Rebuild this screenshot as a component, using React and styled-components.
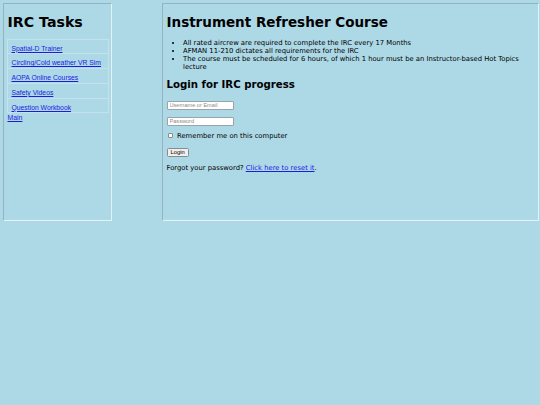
import React from 'react';
import styled, { createGlobalStyle } from 'styled-components';

const Global = createGlobalStyle`
  html, body {
    margin: 0;
    padding: 0;
    background: #add8e6;
    font-family: "DejaVu Sans", Verdana, sans-serif;
    color: #000;
  }
`;

const Styled = {
  Page: styled.div`
    display: flex;
    align-items: flex-start;
    padding: 3px;
    gap: 50px;
    width: 540px;
    height: 405px;
    box-sizing: border-box;
  `,
  Panel: styled.div`
    box-sizing: border-box;
    width: ${(p) => p.width}px;
    height: 218px;
    border: 1.5px solid #e4f2f7;
    border-top-color: #92b4c0;
    border-left-color: #92b4c0;
    padding: 0 3px;
    flex-shrink: 0;
  `,
  SideTitle: styled.h1`
    margin: 9.8px 0 8.5px 0.5px;
    font-size: 14.2px;
    line-height: 16.5px;
    font-weight: bold;
  `,
  TaskList: styled.ul`
    list-style: none;
    margin: 0;
    padding: 0;
    width: 100px;
    border: 1px solid #c4e2ed;
  `,
  TaskItem: styled.li`
    height: 13.7px;
    line-height: 12px;
    padding-left: 3.5px;
    border-top: 1px solid #c4e2ed;
    &:first-child {
      border-top: none;
    }
    a {
      font-family: "Liberation Sans", Arial, sans-serif;
      font-size: 6.8px;
      color: #1c1ce0;
    }
  `,
  MainLink: styled.a`
    display: block;
    margin: 1px 0 0 0.5px;
    font-family: "Liberation Sans", Arial, sans-serif;
    font-size: 6.9px;
    line-height: 8px;
    color: #1c1ce0;
  `,
  Title: styled.h1`
    margin: 9.8px 0 8.5px 0.5px;
    font-size: 13.5px;
    line-height: 16.3px;
    font-weight: bold;
  `,
  Bullets: styled.ul`
    margin: 0;
    padding-left: 17px;
    font-size: 6.8px;
    line-height: 8px;
    li {
      margin: 0;
    }
  `,
  SubTitle: styled.h2`
    margin: 8.5px 0 9.5px 0.5px;
    font-size: 10.2px;
    line-height: 12px;
    font-weight: bold;
  `,
  Form: styled.form`
    margin-left: 0.5px;
    display: flex;
    flex-direction: column;
    align-items: flex-start;
    font-size: 6.8px;
    line-height: 8px;
  `,
  Input: styled.input`
    box-sizing: border-box;
    width: 67px;
    height: 9.5px;
    margin: 0 0 ${(p) => p.gap}px;
    padding: 0 2px;
    font-family: "Liberation Sans", Arial, sans-serif;
    font-size: 5.6px;
    border: 1px solid #9aa4a8;
    border-radius: 1px;
    background: #fff;
    &::placeholder {
      color: #8a8a8a;
    }
  `,
  Remember: styled.label`
    display: flex;
    align-items: center;
    gap: 4px;
    margin: 0 0 8px;
  `,
  Check: styled.input`
    appearance: none;
    box-sizing: border-box;
    width: 5.5px;
    height: 5.5px;
    margin: 0 0 0 1px;
    background: #fff;
    border: 1px solid #8a8a8a;
    border-radius: 1px;
  `,
  Button: styled.button`
    box-sizing: border-box;
    height: 9.5px;
    padding: 0 3px;
    font-family: "Liberation Sans", Arial, sans-serif;
    font-size: 5.8px;
    line-height: 7px;
    color: #000;
    background: #efefef;
    border: 1px solid #8a8a8a;
    border-radius: 1.5px;
    margin: 0 0 7px;
  `,
  Forgot: styled.p`
    margin: 0;
    a {
      color: #1c1ce0;
    }
  `,
};

const tasks = [
  'Spatial-D Trainer',
  'Circling/Cold weather VR Sim',
  'AOPA Online Courses',
  'Safety Videos',
  'Question Workbook',
];

const App = () => (
  <>
    <Global />
    <Styled.Page>
      <Styled.Panel width={109}>
        <Styled.SideTitle>IRC Tasks</Styled.SideTitle>
        <Styled.TaskList>
          {tasks.map((t) => (
            <Styled.TaskItem key={t}>
              <a href="#">{t}</a>
            </Styled.TaskItem>
          ))}
        </Styled.TaskList>
        <Styled.MainLink href="#">Main</Styled.MainLink>
      </Styled.Panel>
      <Styled.Panel width={377}>
        <Styled.Title>Instrument Refresher Course</Styled.Title>
        <Styled.Bullets>
          <li>All rated aircrew are required to complete the IRC every 17 Months</li>
          <li>AFMAN 11-210 dictates all requirements for the IRC</li>
          <li>The course must be scheduled for 6 hours, of which 1 hour must be an Instructor-based Hot Topics lecture</li>
        </Styled.Bullets>
        <Styled.SubTitle>Login for IRC progress</Styled.SubTitle>
        <Styled.Form onSubmit={(e) => e.preventDefault()}>
          <Styled.Input type="text" placeholder="Username or Email" gap={6.5} />
          <Styled.Input type="password" placeholder="Password" gap={5.5} />
          <Styled.Remember>
            <Styled.Check type="checkbox" />
            Remember me on this computer
          </Styled.Remember>
          <Styled.Button type="submit">Login</Styled.Button>
          <Styled.Forgot>
            Forgot your password? <a href="#">Click here to reset it</a>.
          </Styled.Forgot>
        </Styled.Form>
      </Styled.Panel>
    </Styled.Page>
  </>
);

export default App;
